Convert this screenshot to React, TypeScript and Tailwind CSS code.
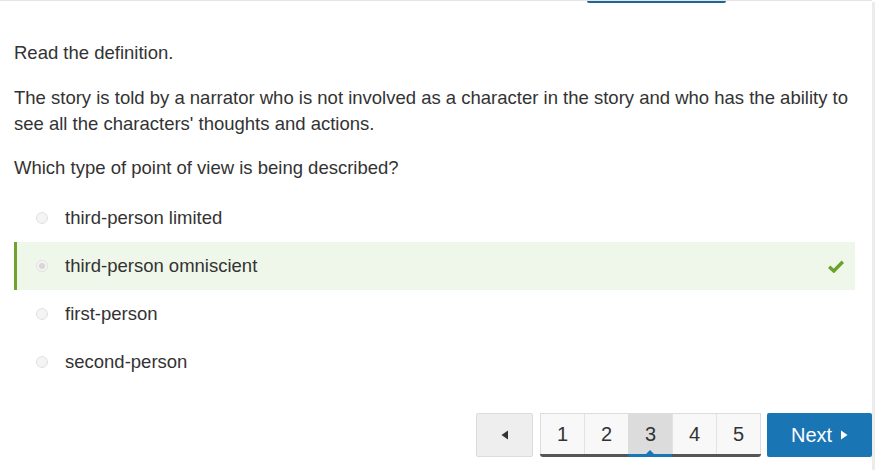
import React from "react";

const options = [
  { label: "third-person limited", selected: false },
  { label: "third-person omniscient", selected: true },
  { label: "first-person", selected: false },
  { label: "second-person", selected: false },
];

function Radio({ checked }: { checked: boolean }) {
  return (
    <span className="flex h-[12px] w-[12px] items-center justify-center rounded-full border border-[#e2e2e2] bg-[#f4f4f4]">
      {checked && <span className="h-[6px] w-[6px] rounded-full bg-[#d6d6d6]" />}
    </span>
  );
}

export default function App() {
  return (
    <div
      className="flex h-[470px] w-[875px] overflow-hidden bg-white text-[#333]"
      style={{ fontFamily: '"Liberation Sans", Arial, sans-serif' }}
    >
      <div className="flex w-[872px] flex-col border-t border-[#e6e6e6]">
        <div className="flex h-[2px]">
          <div className="ml-[587px] h-[2px] w-[139px] rounded-b-[2px] bg-[#1d6698]" />
        </div>
        <div className="flex flex-col pl-[14px] pr-[17px] text-[18.5px] leading-[26px]">
          <p className="mt-[37px]">Read the definition.</p>
          <p className="mt-[19px]">
            The story is told by a narrator who is not involved as a character in the story and who has the ability to
            see all the characters' thoughts and actions.
          </p>
          <p className="mt-[18px]">Which type of point of view is being described?</p>
          <div className="mt-[13px] flex flex-col">
            {options.map((o) => (
              <div
                key={o.label}
                className={
                  o.selected
                    ? "flex h-[48px] items-center border-l-[3px] border-[#6ea32e] bg-[#eef7e9] pl-[19px] pr-[11px]"
                    : "flex h-[48px] items-center border-l-[3px] border-transparent pl-[19px] pr-[11px]"
                }
              >
                <Radio checked={o.selected} />
                <span className="ml-[17px] flex-1">{o.label}</span>
                {o.selected && (
                  <svg width="16" height="13" viewBox="0 0 16 13">
                    <path d="M1.2 6.8 L5.8 11 L14.8 1.8" fill="none" stroke="#6ba22c" strokeWidth="3.4" />
                  </svg>
                )}
              </div>
            ))}
          </div>
        </div>
        <div className="mt-[27px] flex items-start justify-end">
          <button className="flex h-[44px] w-[57px] items-center justify-center rounded-[2px] border border-[#dcdcdc] bg-[#eeeeee] text-[#333]">
            <svg width="8" height="10" viewBox="0 0 8 10">
              <path d="M7 0.5 L7 9.5 L0.5 5 Z" fill="#333" />
            </svg>
          </button>
          <div className="ml-[7px] flex flex-col">
            <div className="flex h-[41px] border border-b-0 border-[#dcdcdc] bg-[#f8f8f8] text-[20px]">
              {[1, 2, 3, 4, 5].map((n) => (
                <div
                  key={n}
                  className={
                    n === 3
                      ? "flex w-[44px] items-center justify-center border-l border-[#dcdcdc] bg-[#dcdcdc]"
                      : n === 1
                      ? "flex w-[43px] items-center justify-center"
                      : "flex w-[44px] items-center justify-center border-l border-[#e2e2e2]"
                  }
                >
                  {n}
                </div>
              ))}
            </div>
            <div className="flex h-[3px] rounded-b-[3px] bg-[#555555]">
              <div className="relative ml-[88px] h-[3px] w-[44px] bg-[#1a75b5]">
                <span className="absolute left-[18px] top-[-4px] h-0 w-0 border-x-[4px] border-b-[4px] border-x-transparent border-b-[#1a75b5]" />
              </div>
            </div>
          </div>
          <button className="ml-[6px] flex h-[44px] w-[105px] items-center justify-center gap-[8px] rounded-[2px] bg-[#1a75b5] text-[20px] text-white">
            <span>Next</span>
            <svg width="8" height="10" viewBox="0 0 8 10">
              <path d="M1 0.5 L1 9.5 L7.5 5 Z" fill="#fff" />
            </svg>
          </button>
        </div>
      </div>
      <div className="mt-[2px] w-[3px] bg-[#ececec]" />
    </div>
  );
}
